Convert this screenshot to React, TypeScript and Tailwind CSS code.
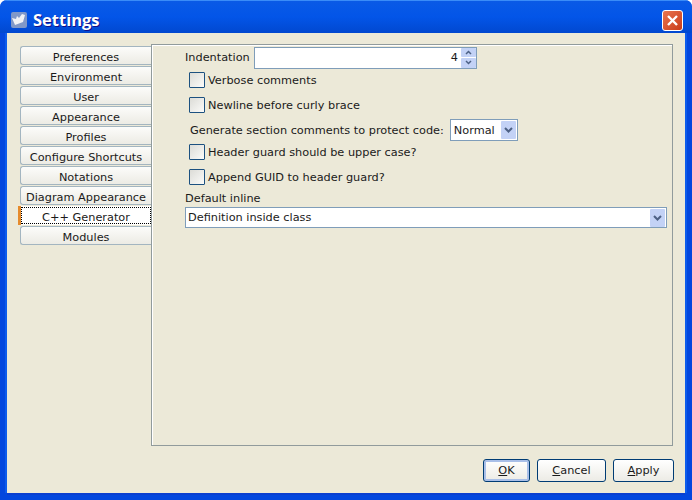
import React from "react";

const tabs = ["Preferences","Environment","User","Appearance","Profiles","Configure Shortcuts","Notations","Diagram Appearance","C++ Generator","Modules"];

function Check({ label, cls }: { label: string; cls: string }) {
  return (
    <div className={"flex items-center " + cls}>
      <div className="w-[16px] h-[16px] rounded-[1px] border border-[#1c5180] bg-gradient-to-br from-[#dcdcd7] to-[#fbfbf9]" />
      <span className="ml-[3px] h-[16px] leading-[18px]">{label}</span>
    </div>
  );
}

function Chevron() {
  return (
    <svg width="9" height="6" viewBox="0 0 9 6"><path d="M1 1l3.5 3.5L8 1" fill="none" stroke="#4d6185" strokeWidth="2" /></svg>
  );
}

function Btn({ children, def, w }: { children: React.ReactNode; def?: boolean; w: string }) {
  return (
    <div className={"h-[23px] rounded-[3px] border border-[#003c74] bg-gradient-to-b from-[#ffffff] to-[#ecebe5] flex items-center justify-center pt-[2px] " + w + (def ? " shadow-[inset_0_0_0_2px_#a9bfe8]" : "")}>
      <span>{children}</span>
    </div>
  );
}

export default function App() {
  return (
    <div className="w-[692px] h-[500px] overflow-hidden rounded-t-[7px] bg-[#0347de] flex flex-col text-[11.3px] text-[#1a1a1a] font-['DejaVu_Sans',sans-serif]">
      <div className="h-[33px] shrink-0 flex items-center bg-gradient-to-b from-[#0a5ae6] via-[#0355e8] to-[#0148d0] border-t border-[#3a8cf8] pt-[6px] pl-[11px] pr-[9px]">
        <div className="w-[16px] h-[16px] rounded-[2px] bg-[#8098c8] flex items-center justify-center">
          <svg width="14" height="12" viewBox="0 0 14 12"><path d="M0 4l4 1 1-3 2 2 3-4 3 1-2 7-8 3z" fill="#f0f2f6" /></svg>
        </div>
        <span className="ml-[6px] text-white font-bold text-[16.5px] font-['Open_Sans',sans-serif] [text-shadow:1px_1px_#0f1089]">Settings</span>
        <div className="ml-auto w-[21px] h-[21px] rounded-[3px] border border-white bg-gradient-to-br from-[#e8744f] to-[#c93a16] flex items-center justify-center">
          <svg width="13" height="13" viewBox="0 0 13 13"><path d="M2 2l9 9M11 2l-9 9" stroke="#fff" strokeWidth="2.4" /></svg>
        </div>
      </div>
      <div className="flex-1 flex flex-col mx-[7px] mb-[7px] bg-[#ece9d8] min-h-0 pt-[11px] shadow-[-2px_0_0_#0d5cec,2px_0_0_#0d5cec,0_2px_0_#0a3fd0]">
        <div className="flex ml-[13px] mr-[12px] h-[402px]">
          <div className="w-[131px] shrink-0 pt-[2px] flex flex-col gap-[1px]">
            {tabs.map((t) =>
              t === "C++ Generator" ? (
                <div key={t} className="h-[19px] -ml-[2px] bg-white border-l-[3px] border-[#e68b2c] flex items-center justify-center">
                  <div className="w-full h-[17px] border border-dotted border-black flex items-center justify-center leading-none pt-[4px]">{t}</div>
                </div>
              ) : (
                <div key={t} className="h-[19px] rounded-tl-[3px] rounded-bl-[3px] border border-r-0 border-[#a3b5c0] bg-gradient-to-b from-[#fcfcfa] to-[#ecebe4] flex items-center justify-center leading-none whitespace-nowrap pt-[4px]">{t}</div>
              )
            )}
          </div>
          <div className="flex-1 border border-[#919b9c] bg-[#ece9d8] shadow-[inset_1px_1px_0_#fff] pt-[1px] pl-[33px] pr-[5px]">
            <div className="flex items-center h-[23px]">
              <span className="w-[69px] pt-[2px]">Indentation</span>
              <div className="w-[223px] h-[22px] border border-[#7f9db9] bg-white flex items-center justify-end">
                <span className="mr-[3px] pt-[2px]">4</span>
                <div className="w-[15px] h-[20px] flex flex-col gap-[1px]">
                  <div className="flex-1 rounded-[1px] bg-[#c3d2f6] flex items-center justify-center">
                    <svg width="7" height="5" viewBox="0 0 7 5"><path d="M1 4l2.5-2.5L6 4" fill="none" stroke="#4d6185" strokeWidth="1.5" /></svg>
                  </div>
                  <div className="flex-1 rounded-[1px] bg-[#c3d2f6] flex items-center justify-center">
                    <svg width="7" height="5" viewBox="0 0 7 5"><path d="M1 1l2.5 2.5L6 1" fill="none" stroke="#4d6185" strokeWidth="1.5" /></svg>
                  </div>
                </div>
              </div>
            </div>
            <Check label="Verbose comments" cls="ml-[4px] mt-[3px]" />
            <Check label="Newline before curly brace" cls="ml-[4px] mt-[9px]" />
            <div className="flex items-center ml-[5px] mt-[6px] h-[22px]">
              <span className="pt-[2px]">Generate section comments to protect code:</span>
              <div className="ml-[6px] w-[68px] h-[22px] border border-[#7f9db9] bg-white flex items-center justify-between pl-[3px] pr-[1px]">
                <span className="pt-[2px]">Normal</span>
                <div className="w-[15px] h-[18px] rounded-[1px] bg-[#c3d2f6] flex items-center justify-center"><Chevron /></div>
              </div>
            </div>
            <Check label="Header guard should be upper case?" cls="mt-[3px] ml-[4px]" />
            <Check label="Append GUID to header guard?" cls="ml-[4px] mt-[9px]" />
            <div className="mt-[7px] leading-[14px]">Default inline</div>
            <div className="mt-[1px] h-[21px] border border-[#7f9db9] bg-white flex items-center justify-between pl-[2px] pr-[1px]">
              <span className="pt-[2px]">Definition inside class</span>
              <div className="w-[15px] h-[18px] rounded-[1px] bg-[#c3d2f6] flex items-center justify-center"><Chevron /></div>
            </div>
          </div>
        </div>
        <div className="flex justify-end mt-[13px] mr-[11px] gap-[7px]">
          <Btn def w="w-[47px]"><u>O</u>K</Btn>
          <Btn w="w-[69px]"><u>C</u>ancel</Btn>
          <Btn w="w-[61px]"><u>A</u>pply</Btn>
        </div>
      </div>
    </div>
  );
}
